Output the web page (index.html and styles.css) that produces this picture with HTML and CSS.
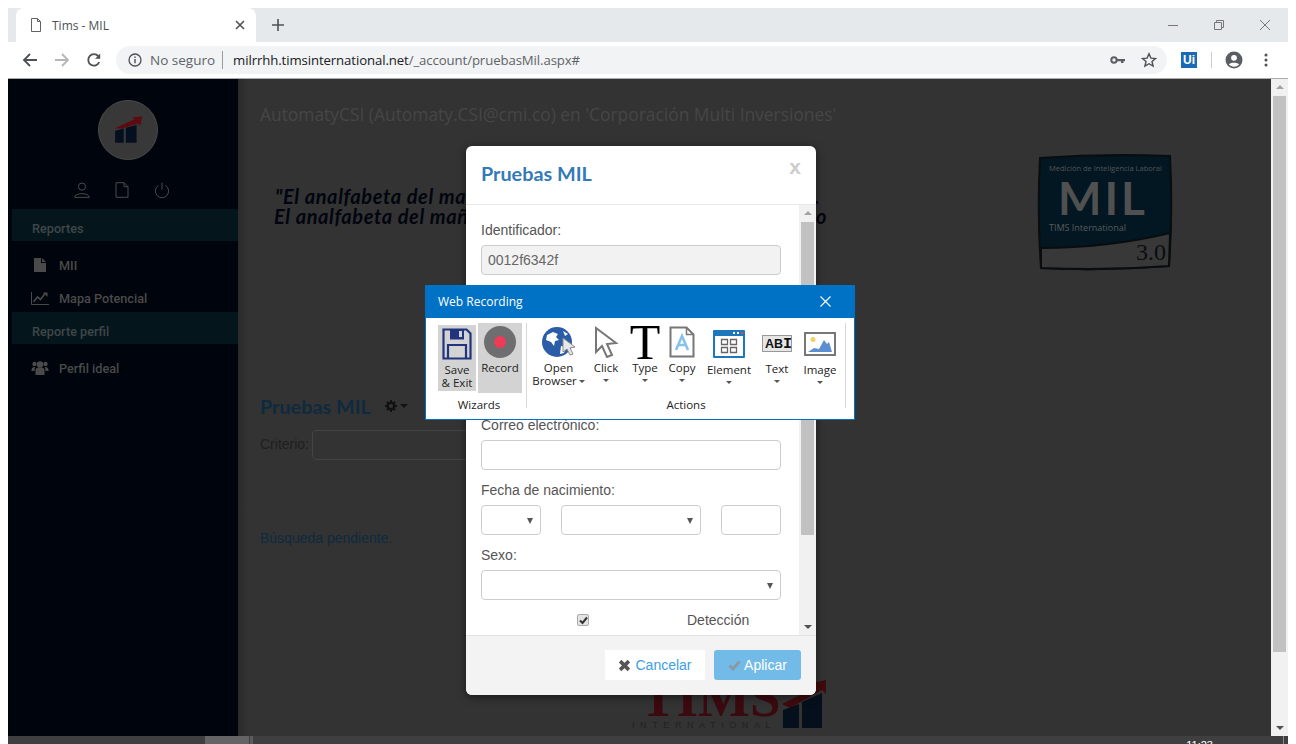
FILE: index.html
```html
<!DOCTYPE html>
<html lang="es">
<head>
    <meta charset="UTF-8">
    <title>Tims - MIL</title>
    <link rel="stylesheet" href="styles.css">
</head>
<body>
    <div class="window">
        <div class="tabstrip">
            <div class="tab">
                <svg class="tab-icon" width="12" height="14" viewBox="0 0 12 14"><path d="M1.5 .5h6l3 3v10h-9zM7.5 .5v3h3" fill="none" stroke="#5f6368"/></svg>
                <span class="tab-title">Tims - MIL</span>
                <svg class="tab-close" width="10" height="10" viewBox="0 0 10 10"><path d="M1 1l8 8M9 1l-8 8" stroke="#4d5054" stroke-width="1.6"/></svg>
            </div>
            <svg class="new-tab" width="14" height="14" viewBox="0 0 14 14"><path d="M7 1v12M1 7h12" stroke="#4d5054" stroke-width="1.6"/></svg>
            <div class="win-controls">
                <svg width="12" height="12" viewBox="0 0 12 12"><path d="M1 6.5h10" stroke="#777"/></svg>
                <svg width="12" height="12" viewBox="0 0 12 12"><path d="M1.5 3.5h7v7h-7zM3.5 3.5v-2h7v7h-2" fill="none" stroke="#777"/></svg>
                <svg width="12" height="12" viewBox="0 0 12 12"><path d="M1 1l10 10M11 1l-10 10" stroke="#777"/></svg>
            </div>
        </div>
        <div class="toolbar">
            <svg class="nav-icon" width="16" height="16" viewBox="0 0 16 16"><path d="M15 8H2M8 2L2 8l6 6" fill="none" stroke="#4d5054" stroke-width="1.8"/></svg>
            <svg class="nav-icon" width="16" height="16" viewBox="0 0 16 16"><path d="M1 8h13M8 2l6 6-6 6" fill="none" stroke="#b4b6b9" stroke-width="1.8"/></svg>
            <svg class="nav-icon" width="16" height="16" viewBox="0 0 16 16"><path d="M13.2 10.2A5.7 5.7 0 1 1 12.3 4.2" fill="none" stroke="#4d5054" stroke-width="1.8"/><path d="M14.2 1.5v5.2H9z" fill="#4d5054"/></svg>
            <div class="omnibox">
                <svg width="14" height="14" viewBox="0 0 14 14"><circle cx="7" cy="7" r="6" fill="none" stroke="#4d5054" stroke-width="1.3"/><path d="M7 6v4.2M7 3.4v1.5" stroke="#4d5054" stroke-width="1.4"/></svg>
                <span class="not-secure">No seguro</span>
                <span class="url"><span class="url-host">milrrhh.timsinternational.net</span>/_account/pruebasMil.aspx#</span>
                <svg class="omni-right" width="15" height="8" viewBox="0 0 15 8"><circle cx="4" cy="4" r="2.7" fill="none" stroke="#5a5d61" stroke-width="2"/><path d="M6 3h9v2.2h-1.5V7H11V5.2H6z" fill="#5a5d61"/></svg>
                <svg class="omni-star" width="16" height="16" viewBox="0 0 16 16"><path d="M8 1.8l1.9 4.3 4.6.4-3.5 3 1.1 4.6L8 11.7l-4.1 2.4L5 9.5l-3.5-3 4.6-.4z" fill="none" stroke="#4d5054" stroke-width="1.4"/></svg>
            </div>
            <span class="ext-ui">Ui</span>
            <span class="toolbar-divider"></span>
            <svg class="profile" width="18" height="18" viewBox="0 0 18 18"><circle cx="9" cy="9" r="8.5" fill="#5a5d61"/><circle cx="9" cy="6.8" r="2.9" fill="#fff"/><path d="M3.8 13.3c1.4-2.2 8.9-2.2 10.4 0-1.2 1.5-3 2.4-5.2 2.4s-4-1-5.2-2.4z" fill="#fff"/></svg>
            <svg class="menu-dots" width="4" height="14" viewBox="0 0 4 14"><circle cx="2" cy="2" r="1.5" fill="#4d5054"/><circle cx="2" cy="7" r="1.5" fill="#4d5054"/><circle cx="2" cy="12" r="1.5" fill="#4d5054"/></svg>
        </div>

        <div class="page">
            <aside class="sidebar">
                <div class="side-logo">
                    <svg width="30" height="32" viewBox="0 0 42 38"><path d="M2 17L30 4l-3-3 14-1-3 13-3-3L13 17z" fill="#5d0a10"/><path d="M3 20l12-3v20H3zM18 16l15-4v25H18z" fill="#04101f"/></svg>
                </div>
                <div class="side-icons">
                    <svg width="16" height="16" viewBox="0 0 16 16"><circle cx="8" cy="4.6" r="3.6" fill="none" stroke="#4a4a4a"/><path d="M.7 15.4c0-5 14.6-5 14.6 0z" fill="none" stroke="#4a4a4a"/></svg>
                    <svg width="16" height="16" viewBox="0 0 16 16"><path d="M2 .7h8l4 4v10.6H2zM10 .7v4h4" fill="none" stroke="#4a4a4a"/></svg>
                    <svg width="16" height="16" viewBox="0 0 16 16"><path d="M4.5 3.5a6.6 6.6 0 1 0 7 0M8 .5v7" fill="none" stroke="#4a4a4a"/></svg>
                </div>
                <div class="side-band">Reportes</div>
                <ul class="side-list side-list-first">
                    <li><svg width="14" height="14" viewBox="0 0 14 14"><path d="M1 0h7v5h5v9H1zM9 0l4 4H9z" fill="#4a4a4a"/></svg>MII</li>
                    <li><svg width="18" height="14" viewBox="0 0 18 14"><path d="M.5 1v12.5H18" fill="none" stroke="#4a4a4a"/><path d="M2.5 11l4-5 3 2.5 4.5-6" fill="none" stroke="#4a4a4a" stroke-width="1.6"/><path d="M12 1.5h4.5V6z" fill="#4a4a4a"/></svg>Mapa Potencial</li>
                </ul>
                <div class="side-band">Reporte perfil</div>
                <ul class="side-list">
                    <li><svg width="17" height="14" viewBox="0 0 17 14"><circle cx="8.5" cy="3.5" r="3.2" fill="#4a4a4a"/><circle cx="3" cy="3" r="2.2" fill="#4a4a4a"/><circle cx="14" cy="3" r="2.2" fill="#4a4a4a"/><path d="M4 14V9c0-2 2-2.5 4.5-2.5S13 7 13 9v5zM0 9.500C0 6.500 1.500 6 3.500 6L3 10H0zM17 9.500C17 6.500 15.500 6 13.500 6l.5 4h3z" fill="#4a4a4a"/></svg>Perfil ideal</li>
                </ul>
            </aside>

            <main class="content">
                <p class="user-line">AutomatyCSI (Automaty.CSI@cmi.co) en 'Corporación Multi Inversiones'</p>
                <div class="hero">
                    <div class="quote">
                        <p class="quote-line quote-line-first"><span>"El analfabeta del mañana</span><span>no sabe leer.</span></p>
                        <p class="quote-line"><span>El analfabeta del mañana</span><span>no ha aprendido</span></p>
                    </div>
                    <svg class="mil-logo" width="136" height="118" viewBox="0 0 136 118">
                        <path d="M3 5Q68 0 133 3 136 60 132 113 68 118 4 115 0 60 3 5z" fill="#021722" stroke="#0a0d10" stroke-width="2"/>
                        <path d="M4 95Q70 95 133 80L132 113Q68 118 4 115z" fill="#383838" stroke="#0a0d10" stroke-width="2"/>
                        <text x="12" y="18" class="mil-small">Medición de Inteligencia  Laboral</text>
                        <text x="21" y="62" class="mil-big">MIL</text>
                        <text x="12" y="78" class="mil-tims">TIMS International</text>
                        <text x="99" y="107" class="mil-ver">3.0</text>
                    </svg>
                </div>
                <div class="section-title">
                    <h2>Pruebas MIL</h2>
                    <svg width="24" height="12" viewBox="0 0 24 12"><circle cx="6" cy="6" r="3.3" fill="none" stroke="#111" stroke-width="2.4"/><path d="M6 0v2M6 10v2M0 6h2M10 6h2M1.800 1.800l1.400 1.400M8.800 8.800l1.400 1.400M1.800 10.200l1.400-1.400M8.800 3.200l1.400-1.400" stroke="#111" stroke-width="1.8"/><path d="M15 4h8l-4 4z" fill="#111"/></svg>
                </div>
                <div class="criteria">
                    <label>Criterio:</label>
                    <span class="criteria-input"></span>
                </div>
                <p class="pending">Búsqueda pendiente.</p>
                <div class="tims-logo">
                    <div class="tims-text">
                        <span class="tims-name">TIMS</span>
                        <span class="tims-sub">INTERNATIONAL</span>
                    </div>
                    <svg width="44" height="48" viewBox="0 0 44 48"><path d="M0 24L34 7l-4-4 14-3v14l-4-4L8 28z" fill="#400a0e"/><path d="M1 30l16-6v24H1zM20 22l20-9v35H20z" fill="#05101c"/></svg>
                </div>
            </main>

            <div class="page-scroll">
                <span class="arrow-up"></span>
                <span class="page-thumb"></span>
                <span class="arrow-down"></span>
            </div>
        </div>
        <div class="hscroll">
            <span class="hscroll-thumb"></span>
            <span class="hscroll-grip"></span>
            <span class="clock">11:23</span>
            <span class="hscroll-edge"></span>
        </div>
    </div>

    <div class="modal">
        <header class="modal-head">
            <h3>Pruebas MIL</h3>
            <span class="modal-x">x</span>
        </header>
        <div class="modal-body">
            <div class="form">
                <div class="field">
                    <label>Identificador:</label>
                    <div class="input input-locked">0012f6342f</div>
                </div>
                <div class="field-gap"></div>
                <div class="field">
                    <label>Correo electrónico:</label>
                    <div class="input"></div>
                </div>
                <div class="field">
                    <label>Fecha de nacimiento:</label>
                    <div class="date-row">
                        <div class="input select date-day"></div>
                        <div class="input select date-month"></div>
                        <div class="input date-year"></div>
                    </div>
                </div>
                <div class="field">
                    <label>Sexo:</label>
                    <div class="input select"></div>
                </div>
                <div class="check-row">
                    <span class="checkbox"><svg width="9" height="9" viewBox="0 0 9 9"><path d="M1 4.5l2.500 2.500L8 1.500" fill="none" stroke="#333" stroke-width="2"/></svg></span>
                    <span class="check-label">Detección</span>
                </div>
            </div>
            <div class="modal-scroll">
                <span class="arrow-up"></span>
                <span class="modal-thumb"></span>
                <span class="arrow-down"></span>
            </div>
        </div>
        <footer class="modal-foot">
            <button class="btn btn-cancel"><svg width="13" height="13" viewBox="0 0 11 11"><path d="M1.800 1.800l7.400 7.400M9.200 1.800L1.800 9.200" stroke="#555" stroke-width="3"/></svg>Cancelar</button>
            <button class="btn btn-apply"><svg width="13" height="11" viewBox="0 0 13 11"><path d="M1.500 5.500L5 9l6.500-7.500" fill="none" stroke="#8a9aa5" stroke-width="3"/></svg>Aplicar</button>
        </footer>
    </div>

    <div class="recorder">
        <div class="rec-title">
            <span>Web Recording</span>
            <svg width="11" height="11" viewBox="0 0 11 11"><path d="M.5.5l10 10M10.500.5l-10 10" stroke="#fff" stroke-width="1.1"/></svg>
        </div>
        <div class="ribbon">
            <section class="group group-wizards">
                <div class="tools">
                    <div class="tool tool-save">
                        <svg width="30" height="32" viewBox="0 0 30 32"><path d="M1.500 1.500h23l4 4v25h-27z" fill="none" stroke="#23347f" stroke-width="2.2"/><path d="M8 1.500h14v10H8z" fill="#23347f"/><path d="M17 3h3v6h-3z" fill="#d3d3d3"/><path d="M6 30V17h18v13" fill="none" stroke="#23347f" stroke-width="2.2"/></svg>
                        <span class="tool-label">Save<br>&amp; Exit</span>
                    </div>
                    <div class="tool tool-record">
                        <svg width="32" height="32" viewBox="0 0 32 32"><circle cx="16" cy="16" r="16" fill="#6e6e70"/><circle cx="16" cy="16" r="6" fill="#ef3a58"/></svg>
                        <span class="tool-label">Record</span>
                    </div>
                </div>
                <span class="group-name">Wizards</span>
            </section>
            <section class="group group-actions">
                <div class="tools">
                    <div class="tool tool-open">
                        <svg width="36" height="32" viewBox="0 0 36 32"><circle cx="16" cy="16" r="15" fill="#2b5ca8"/><path d="M6 9l6-3 5 2-2 3 3 3-4 1-1 5-3-4-5-2zM20 20l5 1-2 6-4 1zM22 5l5 3-3 2z" fill="#fff"/><path d="M22 12v14l4-3 3 6 3-1-3-6 5-1z" fill="#e8e8e8" stroke="#888"/></svg>
                        <span class="tool-label">Open<br><span class="inline-caret">Browser</span></span>
                    </div>
                    <div class="tool tool-click">
                        <svg width="26" height="32" viewBox="0 0 26 32"><path d="M3 2v24l6-6 5 11 5-2-5-11 9-1z" fill="#fff" stroke="#777" stroke-width="2"/></svg>
                        <span class="tool-label">Click</span>
                        <i class="caret"></i>
                    </div>
                    <div class="tool tool-type">
                        <span class="type-t">T</span>
                        <span class="tool-label">Type</span>
                        <i class="caret"></i>
                    </div>
                    <div class="tool tool-copy">
                        <svg width="26" height="32" viewBox="0 0 26 32"><path d="M1.500 1.500h16l7 7v22h-23z" fill="#fff" stroke="#777" stroke-width="2"/><path d="M17.500 1.500v7h7" fill="none" stroke="#777" stroke-width="1.5"/><path d="M7 24l6-14 6 14M9 19h8" fill="none" stroke="#85c3ea" stroke-width="2.6"/></svg>
                        <span class="tool-label">Copy</span>
                        <i class="caret"></i>
                    </div>
                    <div class="tool tool-element">
                        <svg width="32" height="28" viewBox="0 0 32 28"><rect width="32" height="28" rx="1" fill="#1c78bd"/><rect x="2" y="6" width="28" height="20" fill="#fff"/><path d="M20 3h2M24 3h2" stroke="#fff" stroke-width="1.8"/><path d="M28 3h2" stroke="#ee4060" stroke-width="1.8"/><path d="M8.500 9.500h6v5h-6zM17.500 9.500h6v5h-6zM8.500 17.500h6v5h-6zM17.500 17.500h6v5h-6z" fill="none" stroke="#666" stroke-width="1.3"/></svg>
                        <span class="tool-label">Element</span>
                        <i class="caret"></i>
                    </div>
                    <div class="tool tool-text">
                        <div class="abi">AB<span class="abi-cursor">I</span></div>
                        <span class="tool-label">Text</span>
                        <i class="caret"></i>
                    </div>
                    <div class="tool tool-image">
                        <svg width="32" height="24" viewBox="0 0 32 24"><rect x="1" y="1" width="30" height="22" fill="#fff" stroke="#777" stroke-width="2"/><circle cx="9" cy="7.500" r="2.500" fill="#f2d264"/><path d="M4 20l6-4 5 1 5-9 3 4 2-2 3 10z" fill="#5c8fcf"/></svg>
                        <span class="tool-label">Image</span>
                        <i class="caret"></i>
                    </div>
                </div>
                <span class="group-name">Actions</span>
            </section>
        </div>
    </div>
</body>
</html>
```

FILE: styles.css
```css
html, body {
    margin: 0;
    height: 744px;
    overflow: hidden;
    background-color: white;
}
body {
    font-family: "Liberation Sans", Arial, sans-serif;
    font-size: 14px;
}
p, h2, h3, ul {
    margin: 0;
    padding: 0;
}
.window {
    margin: 8px 0 0 8px;
    width: 1280px;
}

/* browser chrome */
.tabstrip {
    height: 34px;
    background-color: #e6e9ec;
    display: flex;
    align-items: flex-end;
}
.tab {
    width: 240px;
    margin-left: 8px;
    height: 34px;
    background-color: white;
    border-radius: 8px 8px 0 0;
    display: flex;
    align-items: center;
    font-family: "Open Sans", sans-serif;
    font-size: 12px;
    color: #4d5054;
}
.tab-icon {
    margin-left: 14px;
}
.tab-title {
    margin-left: 10px;
    flex: 1;
}
.tab-close {
    margin-right: 11px;
}
.new-tab {
    margin: 0 0 10px 15px;
}
.win-controls {
    margin-left: auto;
    height: 34px;
    display: flex;
    align-items: center;
    gap: 34px;
    padding-right: 17px;
}
.toolbar {
    height: 36px;
    border-bottom: 1px solid #a9abad;
    background-color: white;
    display: flex;
    align-items: center;
}
.nav-icon {
    margin-left: 14px;
}
.nav-icon + .nav-icon {
    margin-left: 16px;
}
.omnibox {
    margin-left: 14px;
    width: 1051px;
    height: 28px;
    border-radius: 14px;
    background-color: #f1f3f4;
    display: flex;
    align-items: center;
    padding-left: 12px;
    box-sizing: border-box;
    font-family: "Open Sans", sans-serif;
    font-size: 13.5px;
}
.not-secure {
    margin-left: 8px;
    padding-right: 7px;
    border-right: 1px solid #9a9c9f;
    color: #5f6368;
    line-height: 18px;
}
.url {
    margin-left: 10px;
    color: #5f6368;
    font-size: 13.2px;
    letter-spacing: -0.1px;
}
.url-host {
    color: #202124;
}
.omni-right {
    margin-left: auto;
}
.omni-star {
    margin: 0 10px 0 16px;
}
.ext-ui {
    margin-left: 14px;
    width: 16px;
    height: 16px;
    background-color: #1b6ab5;
    color: white;
    font: bold 12px/16px "Liberation Sans", sans-serif;
    text-align: center;
}
.toolbar-divider {
    margin-left: 14px;
    width: 1px;
    height: 16px;
    background-color: #ccc;
}
.profile {
    margin-left: 13px;
}
.menu-dots {
    margin-left: 21px;
}

/* page */
.page {
    height: 657px;
    display: flex;
    background-color: #333;
    overflow: hidden;
}
.sidebar {
    width: 230px;
    flex: none;
    background-color: #00040c;
    font-family: Roboto, sans-serif;
    font-weight: 500;
    font-size: 12.7px;
    color: #4a4a4a;
}
.side-logo {
    width: 58px;
    height: 58px;
    margin: 21px 0 0 90px;
    border-radius: 50%;
    border: 1px solid #4a4a4a;
    background-color: #383838;
    display: flex;
    align-items: center;
    justify-content: center;
}
.side-icons {
    display: flex;
    justify-content: center;
    gap: 24px;
    margin: 22px 2px 0 0;
    height: 27px;
}
.side-band {
    margin-left: 4px;
    height: 32px;
    line-height: 40px;
    padding-left: 20px;
    background-color: #04161b;
    color: #3f4649;
    overflow: hidden;
}
.side-list {
    list-style: none;
    padding-top: 9px;
}
.side-list-first {
    margin-bottom: -1px;
    height: 63px;
}
.side-list li {
    height: 30px;
    margin-bottom: 3px;
    padding-left: 23px;
    display: flex;
    align-items: center;
}
.side-list svg {
    width: 18px;
    margin-right: 10px;
}
.content {
    flex: 1;
    padding-left: 22px;
    background: linear-gradient(to right, #2a2a2a, #333 10px);
    min-width: 0;
}
.user-line {
    margin-top: 24px;
    height: 22px;
    font-family: "Open Sans", sans-serif;
    font-size: 17.4px;
    line-height: 22px;
    color: #464646;
}
.hero {
    display: flex;
    margin-top: 28px;
    height: 118px;
}
.quote {
    width: 553px;
    margin: 33px 0 0 14px;
    font-family: Lato, sans-serif;
    font-weight: 700;
    font-style: italic;
    font-size: 20px;
    line-height: 20px;
    letter-spacing: 0.6px;
    color: #02050f;
}
.quote-line {
    display: flex;
    justify-content: space-between;
    white-space: nowrap;
}
.quote-line-first {
    padding: 0 7px 0 1px;
}
.mil-logo {
    margin-left: auto;
    margin-right: 98px;
}
.mil-small {
    font: 7.5px "Open Sans", sans-serif;
    fill: #555;
}
.mil-big {
    font: 700 46px Lato, sans-serif;
    letter-spacing: 3px;
    fill: #505050;
}
.mil-tims {
    font: 9px "Open Sans", sans-serif;
    fill: #5a5a5a;
}
.mil-ver {
    font: 24px "Liberation Serif", serif;
    fill: #0a0d10;
}
.section-title {
    margin-top: 123px;
    height: 24px;
    display: flex;
    align-items: center;
    gap: 14px;
}
.section-title h2 {
    font-family: Lato, sans-serif;
    font-size: 19.8px;
    font-weight: 700;
    color: #0e2a3f;
}
.criteria {
    margin-top: 12px;
    display: flex;
    align-items: center;
    gap: 3px;
    color: #1f1f1f;
}
.criteria label {
    margin-top: -2px;
}
.criteria-input {
    width: 400px;
    height: 28px;
    border: 1px solid #444;
    border-radius: 4px;
}
.pending {
    margin-top: 70px;
    height: 16px;
    line-height: 16px;
    color: #0e2a3f;
}
.tims-logo {
    margin: 134px 0 0 380px;
    display: flex;
    align-items: flex-end;
    height: 48px;
}
.tims-text {
    display: flex;
    flex-direction: column;
    width: 140px;
    margin-right: 2px;
}
.tims-name {
    font: 700 55px/38px "Liberation Serif", serif;
    color: #3b0a0e;
    white-space: nowrap;
}
.tims-sub {
    margin: 3px 0 -3px -8px;
    font-size: 9px;
    line-height: 11px;
    letter-spacing: 5.6px;
    color: #222;
    white-space: nowrap;
}
.page-scroll {
    width: 17px;
    flex: none;
    background-color: #f1f1f1;
    position: relative;
    display: flex;
    flex-direction: column;
    align-items: center;
}
.arrow-up, .arrow-down {
    position: absolute;
    width: 0;
    height: 0;
    border-left: 4px solid transparent;
    border-right: 4px solid transparent;
}
.arrow-up {
    top: 6px;
    border-bottom: 4px solid #a3a3a3;
}
.arrow-down {
    bottom: 6px;
    border-top: 4px solid #505050;
}
.page-thumb {
    width: 13px;
    height: 556px;
    margin-top: 17px;
    background-color: #c1c1c1;
}
.hscroll {
    height: 8px;
    width: 1280px;
    background-color: #3f3f3f;
    overflow: hidden;
    display: flex;
}
.hscroll-thumb {
    margin-left: 197px;
    width: 44px;
    background-color: #646464;
}
.hscroll-grip {
    margin-left: 1px;
    width: 3px;
    background-color: #5c5c5c;
}
.clock {
    margin-left: auto;
    margin-right: 70px;
    margin-top: 3px;
    color: white;
    font-size: 11px;
    line-height: 12px;
}
.hscroll-edge {
    width: 1px;
    margin-right: 4px;
    background-color: #8a8a8a;
}

/* modal over the page */
.modal {
    position: absolute;
    left: 466px;
    top: 146px;
    width: 350px;
    height: 549px;
    background-color: white;
    border-radius: 6px;
    overflow: hidden;
    box-shadow: 0 2px 8px rgba(0, 0, 0, 0.5);
    display: flex;
    flex-direction: column;
}
.modal-head {
    height: 58px;
    flex: none;
    border-bottom: 1px solid #e8e8e8;
    display: flex;
    align-items: center;
    justify-content: space-between;
    padding: 0 15px;
}
.modal-head h3 {
    margin-bottom: 4px;
    font-family: Lato, sans-serif;
    font-size: 19.8px;
    font-weight: 700;
    color: #337ab7;
}
.modal-x {
    margin-bottom: 16px;
    font-weight: 700;
    font-size: 21px;
    color: #cdcdcd;
}
.modal-body {
    height: 430px;
    flex: none;
    display: flex;
}
.form {
    flex: 1;
    padding: 15px 0 0 15px;
    min-width: 0;
    color: #555;
}
.field {
    width: 300px;
    height: 65px;
}
.field label {
    display: block;
    line-height: 20px;
    margin-bottom: 5px;
}
.field-gap {
    height: 130px;
}
.input {
    height: 28px;
    border: 1px solid #ccc;
    border-radius: 4px;
    background-color: white;
    line-height: 28px;
    padding-left: 6px;
    position: relative;
}
.input-locked {
    background-color: #f2f2f2;
    color: #666;
}
.select::after {
    content: "";
    position: absolute;
    right: 7px;
    top: 12px;
    border-left: 3px solid transparent;
    border-right: 3px solid transparent;
    border-top: 6px solid #555;
}
.date-row {
    display: flex;
    gap: 20px;
}
.date-day {
    width: 52px;
}
.date-month {
    width: 132px;
}
.date-year {
    width: 52px;
}
.check-row {
    display: flex;
    align-items: center;
    height: 20px;
}
.checkbox {
    margin-left: 96px;
    width: 10px;
    height: 10px;
    border: 1px solid #aaa;
    border-radius: 2px;
    background-color: #e4e4e4;
    display: flex;
    align-items: center;
    justify-content: center;
}
.check-label {
    margin-left: 98px;
}
.modal-scroll {
    width: 17px;
    flex: none;
    background-color: #f1f1f1;
    position: relative;
    display: flex;
    justify-content: center;
}
.modal-thumb {
    width: 13px;
    height: 313px;
    margin-top: 17px;
    background-color: #c1c1c1;
}
.modal-foot {
    flex: 1;
    border-top: 1px solid #e2e2e2;
    background-color: #f3f3f3;
    display: flex;
    justify-content: flex-end;
    align-items: flex-start;
    gap: 9px;
    padding: 14px 15px 0 0;
}
.btn {
    height: 30px;
    border: none;
    font-family: "Liberation Sans", sans-serif;
    font-size: 14px;
    display: flex;
    align-items: center;
    justify-content: center;
    gap: 4px;
    padding: 0;
}
.btn-cancel {
    width: 100px;
    background-color: white;
    color: #3aa0e6;
}
.btn-apply {
    width: 87px;
    background-color: #72bbe8;
    border-radius: 3px;
    color: white;
    gap: 3px;
}

/* recording window */
.recorder {
    position: absolute;
    left: 425px;
    top: 285px;
    width: 430px;
    height: 135px;
    box-sizing: border-box;
    border: 1px solid #0072c6;
    background-color: white;
    font-family: "Open Sans", sans-serif;
    font-size: 11.5px;
    color: #222;
}
.rec-title {
    height: 33px;
    margin: -1px -1px 0;
    padding: 0 24px 0 13px;
    background-color: #0072c6;
    color: white;
    font-size: 12px;
    display: flex;
    align-items: center;
    justify-content: space-between;
}
.ribbon {
    display: flex;
    padding: 5px 0 0 12px;
}
.group {
    display: flex;
    flex-direction: column;
    align-items: center;
    height: 85px;
    border-right: 1px solid #d8d8d8;
}
.group-wizards {
    width: 82px;
    padding-right: 6px;
}
.group-actions {
    width: 318px;
}
.tools {
    display: flex;
    flex: none;
    height: 70px;
    align-self: flex-start;
}
.group-name {
    line-height: 14px;
    margin-top: 5px;
}
.tool {
    display: flex;
    flex-direction: column;
    align-items: center;
    text-align: center;
    line-height: 13px;
    box-sizing: border-box;
    padding-top: 3px;
}
.tool > svg {
    flex: none;
}
.tool-label {
    white-space: nowrap;
    margin-top: 3px;
}
.tool-save {
    width: 38px;
    height: 66px;
    margin-top: 2px;
    background-color: #d3d3d3;
}
.tool-record {
    width: 44px;
    height: 70px;
    margin-left: 2px;
    background-color: #d3d3d3;
}
.tool-open {
    width: 51px;
    margin-left: 6px;
}
.tool-click {
    width: 44px;
}
.tool-type {
    width: 34px;
}
.tool-copy {
    width: 40px;
}
.tool-element {
    width: 54px;
    padding-top: 7px;
}
.tool-element .tool-label {
    margin-top: 5px;
}
.tool-text {
    width: 42px;
    padding-top: 12px;
}
.tool-text .tool-label {
    margin-top: 10px;
}
.tool-image {
    width: 40px;
    margin-left: 2px;
    padding-top: 9px;
}
.tool-image .tool-label {
    margin-top: 7px;
}
.type-t {
    font: 50px/32px "Liberation Serif", serif;
    height: 32px;
    color: black;
}
.abi {
    width: 30px;
    height: 17px;
    border: 1px solid #999;
    background-color: #e6e6e6;
    font: 700 12.5px/17px "Liberation Sans", sans-serif;
    color: #111;
    text-align: left;
    padding-left: 2px;
    box-sizing: border-box;
    flex: none;
}
.abi-cursor {
    font: 700 15px/17px "Liberation Mono", monospace;
}
.caret {
    margin-top: 5px;
    border-left: 3px solid transparent;
    border-right: 3px solid transparent;
    border-top: 3px solid #555;
}
.inline-caret::after {
    content: "";
    display: inline-block;
    margin-left: 2px;
    vertical-align: middle;
    border-left: 3px solid transparent;
    border-right: 3px solid transparent;
    border-top: 3px solid #555;
}
```
